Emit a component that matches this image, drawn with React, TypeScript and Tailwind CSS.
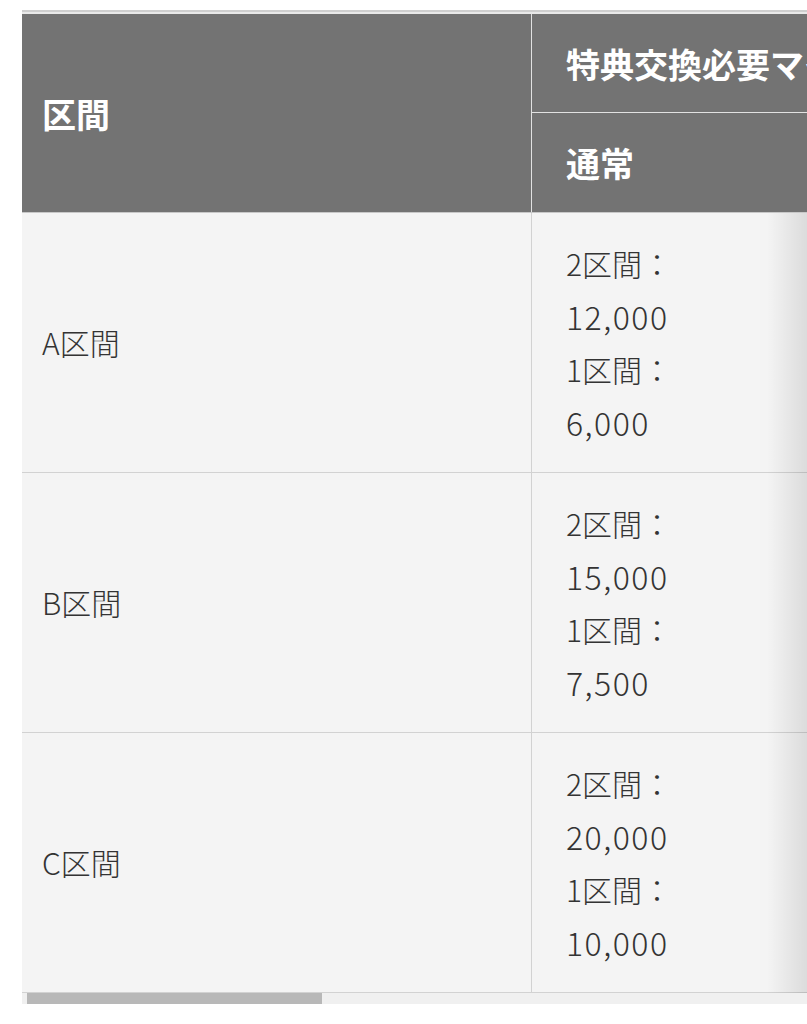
const FONT = { fontFamily: '"Noto Sans CJK JP", "Noto Sans", sans-serif' };

const ROWS = [
  { name: 'A区間', lines: ['2区間：', '12,000', '1区間：', '6,000'] },
  { name: 'B区間', lines: ['2区間：', '15,000', '1区間：', '7,500'] },
  { name: 'C区間', lines: ['2区間：', '20,000', '1区間：', '10,000'] },
];

function BodyRow({ name, lines }: { name: string; lines: string[] }) {
  return (
    <div className="flex h-[260px] border-b border-[#d2d2d2] bg-[#f4f4f4] font-light text-[#333]">
      <div className="flex w-[510px] shrink-0 items-center border-r border-[#d2d2d2] pl-[20px] text-[30px]">
        {name}
      </div>
      <div className="flex w-[1200px] shrink-0 flex-col justify-center pl-[34px] text-[30px] leading-[53px]">
        {lines.map((l, i) => (
          <div key={i} className={/^[\d,]+$/.test(l) ? 'text-[32px] tracking-[1.5px]' : ''}>
            {l}
          </div>
        ))}
      </div>
    </div>
  );
}

export default function App() {
  return (
    <div className="min-h-[1024px] bg-white pt-[10px]" style={FONT}>
      <div className="ml-[22px] w-[785px]">
        <div className="h-[2px] bg-[#cfcfcf]" />
        <div className="h-[2px] bg-[#e9e9e9]" />
        <div className="relative overflow-hidden">
          <div className="w-[1710px]">
            <div className="flex border-b border-[#c8c8c8] bg-[#737373] font-bold text-white">
              <div className="flex h-[198px] w-[510px] shrink-0 items-center border-r border-[#e2e2e2] pl-[20px] text-[34px]">
                区間
              </div>
              <div className="flex w-[1200px] shrink-0 flex-col">
                <div className="flex h-[99px] items-center whitespace-nowrap border-b border-[#e2e2e2] pl-[34px] text-[34px]">
                  特典交換必要マイル
                </div>
                <div className="flex h-[99px] items-center pl-[34px] text-[34px]">通常</div>
              </div>
            </div>
            {ROWS.map((r) => (
              <BodyRow key={r.name} name={r.name} lines={r.lines} />
            ))}
          </div>
          <div className="pointer-events-none absolute right-0 top-[199px] bottom-0 w-[40px] bg-gradient-to-r from-transparent to-black/10" />
        </div>
        <div className="flex h-[11px] bg-[#f0f0f0] pl-[5px]">
          <div className="h-full w-[295px] bg-[#b8b8b8]" />
        </div>
      </div>
    </div>
  );
}
